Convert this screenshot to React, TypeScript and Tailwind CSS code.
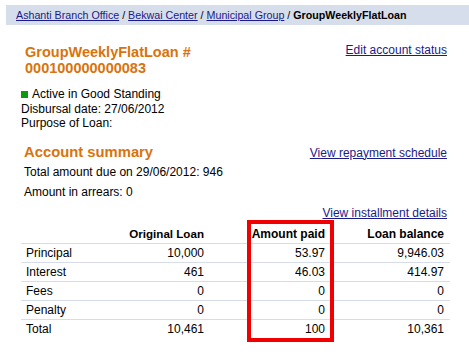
import React from "react";

const rows = [
  ["Principal", "10,000", "53.97", "9,946.03"],
  ["Interest", "461", "46.03", "414.97"],
  ["Fees", "0", "0", "0"],
  ["Penalty", "0", "0", "0"],
  ["Total", "10,461", "100", "10,361"],
];

export default function App() {
  const link = "text-[#1a1a8a] underline";
  return (
    <div className="relative w-[469px] h-[360px] overflow-hidden bg-white text-black font-['Liberation_Sans',Arial,sans-serif]">
      <div className="ml-[6px] mt-[5px] h-[20px] bg-[#d7deeb] pl-[10px] flex items-center text-[10.7px] whitespace-nowrap">
        <a className={link}>Ashanti Branch Office</a>
        <span>&nbsp;/&nbsp;</span>
        <a className={link}>Bekwai Center</a>
        <span>&nbsp;/&nbsp;</span>
        <a className={link}>Municipal Group</a>
        <span>&nbsp;/&nbsp;</span>
        <span className="font-bold">GroupWeeklyFlatLoan</span>
      </div>

      <div className="ml-[21px] w-[429px]">
        <div className="mt-[19px] flex justify-between items-start">
          <div className="pl-[4px] text-[14.5px] leading-[16px] font-bold text-[#d9730d]">
            <div>GroupWeeklyFlatLoan #</div>
            <div>000100000000083</div>
          </div>
          <a className={`${link} text-[12px] leading-[14px] pr-[3px] mt-[-1px]`}>Edit account status</a>
        </div>

        <div className="mt-[11px] text-[12px] leading-[14.5px]">
          <div className="flex items-center">
            <span className="inline-block w-[7px] h-[7px] bg-[#0a9a0a] mr-[4px]"></span>
            <span>Active in Good Standing</span>
          </div>
          <div>Disbursal date: 27/06/2012</div>
          <div>Purpose of Loan:</div>
        </div>

        <div className="mt-[13px] flex justify-between items-center h-[18px]">
          <div className="pl-[3px] text-[14.8px] font-bold text-[#d9730d]">Account summary</div>
          <a className={`${link} text-[12px] pr-[3px]`}>View repayment schedule</a>
        </div>

        <div className="mt-[3px] pl-[3px] text-[12px] leading-[14px]">Total amount due on 29/06/2012: 946</div>
        <div className="mt-[6px] pl-[3px] text-[12px] leading-[14px]">Amount in arrears: 0</div>
        <div className="mt-[7px] flex justify-end text-[12px] leading-[14px]">
          <a className={`${link} pr-[3px]`}>View installment details</a>
        </div>

        <div className="mt-[5px] text-[12px]">
          <div className="flex h-[18px] items-center font-bold border-b border-[#d6dce9] box-content">
            <div className="w-[69px]"></div>
            <div className="w-[120px] text-right pr-[6px] text-[11.6px]">Original Loan</div>
            <div className="w-[121px] text-right pr-[6px]">Amount paid</div>
            <div className="w-[119px] text-right pr-[6px]">Loan balance</div>
          </div>
          {rows.map((r, i) => (
            <div
              key={r[0]}
              className={`flex h-[18px] items-center box-content ${i < rows.length - 1 ? "border-b border-[#d6dce9]" : ""}`}
            >
              <div className="w-[69px] pl-[5px]">{r[0]}</div>
              <div className="w-[120px] text-right pr-[6px]">{r[1]}</div>
              <div className="w-[121px] text-right pr-[6px]">{r[2]}</div>
              <div className="w-[119px] text-right pr-[6px]">{r[3]}</div>
            </div>
          ))}
        </div>
      </div>

      <div className="absolute left-[247px] top-[220px] w-[87px] h-[122px] border-[4px] border-[#f00000]"></div>
    </div>
  );
}
